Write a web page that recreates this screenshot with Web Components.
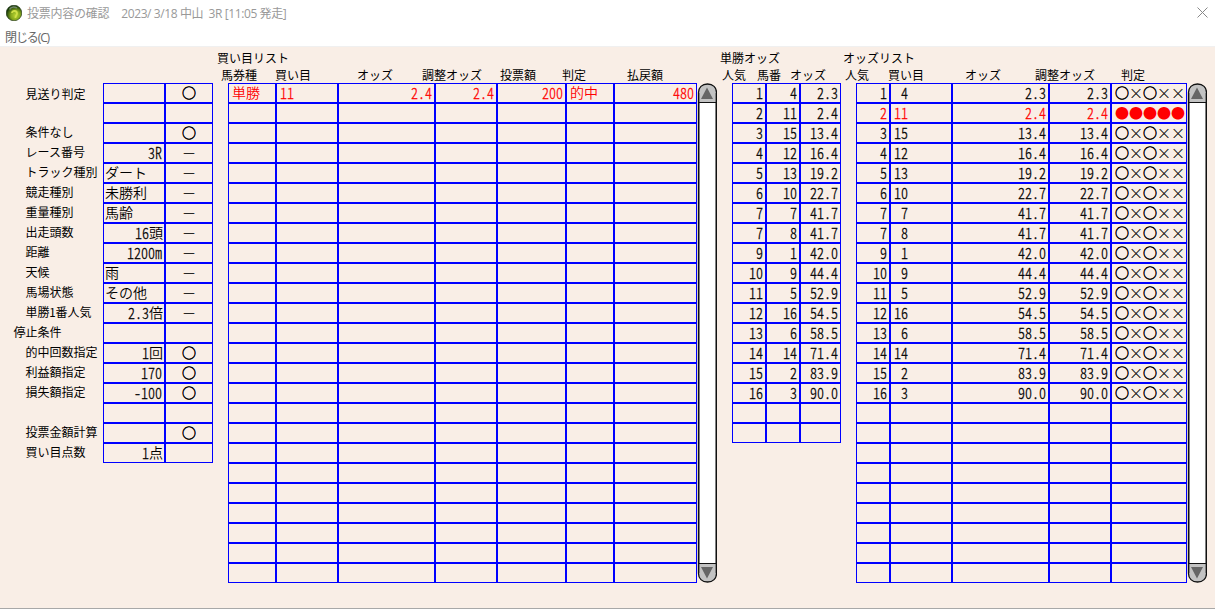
<!DOCTYPE html>
<html lang="ja">
  <head>
    <meta charset="UTF-8" />
    <meta name="viewport" content="width=device-width, initial-scale=1.0" />
    <title>投票内容の確認</title>
    <style>
      body {
        margin: 0;
        font-family: "Noto Sans CJK JP", sans-serif;
      }
    </style>
  </head>
  <body>
    <script>
      // one bordered grid; columns look like "48:l,62:r" (width:align)
      class GridTable extends HTMLElement {
        constructor() {
          super();
          this.attachShadow({ mode: "open" });
          this._rows = [];
        }

        set data(rows) {
          this._rows = rows;
          this._rendering();
        }

        connectedCallback() {
          this._rendering();
        }

        _rendering() {
          const cols = this.getAttribute("cols").split(",").map((c) => c.split(":"));
          const count = Number(this.getAttribute("rows"));
          let html = "";
          for (let i = 0; i < count; i++) {
            const row = this._rows[i] || [];
            html += `<div class="row${row.red ? " red" : ""}">`;
            cols.forEach(([width, align], c) => {
              const text = row[c] === undefined ? "" : row[c];
              // "a" puts values that start with a digit to the right
              if (align === "a") align = /^[-0-9]/.test(text) ? "r" : "k";
              html += `<div class="cell ${align}" style="width:${width}px">${this._cell(text)}</div>`;
            });
            html += "</div>";
          }
          this.shadowRoot.innerHTML = `
            <style>
              :host { display: block; flex: none; }
              .row { display: flex; height: 20px; }
              .cell {
                box-sizing: border-box;
                border: 1px solid #0000ff;
                height: 20px;
                padding-bottom: 2px;
                display: flex;
                align-items: center;
                font-size: 14px;
                line-height: 16px;
                white-space: pre;
              }
              .l { padding-left: 3px; }
              .k { padding-left: 1px; }
              .r { justify-content: flex-end; padding-right: 1px; }
              .c { justify-content: center; }
              .red { color: #ff0000; }
              .t { font-weight: 350; }
              .n { line-height: 14px; font-weight: 300; -webkit-text-stroke: 0.25px currentColor; transform: scaleY(1.1); }
              .r .n:last-child { margin-right: 1px; }
              .o { -webkit-text-stroke: 0.5px currentColor; }
              .x { font-weight: 300; -webkit-text-stroke: 0.2px currentColor; }
              .t, .o, .x { font-feature-settings: normal; }
            </style>${html}`;
        }

        // digits are stretched to the tall shape of the half-width face
        _cell(text) {
          return text
            .split(/([0-9.\-Rm ]+|○|×+|－)/)
            .filter((t) => t)
            .map((t) => {
              let kind = "t";
              if (/^[0-9.\-Rm ]+$/.test(t)) kind = "n";
              else if (t === "○") kind = "o";
              else if (t[0] === "×" || t === "－") kind = "x";
              return `<span class="${kind}">${t}</span>`;
            })
            .join("");
        }
      }
      customElements.define("grid-table", GridTable);

      class ScrollRail extends HTMLElement {
        constructor() {
          super();
          this.attachShadow({ mode: "open" });
          this.shadowRoot.innerHTML = `
            <style>
              :host { display: block; flex: none; width: 20px; height: 500px; }
              svg { display: block; }
            </style>
            <svg width="20" height="500" viewBox="0 0 20 500">
              <path d="M1.500 20V9.500C1.500 4.500 5 1 10.500 1S19.500 4.500 19.500 9.500V490.500C19.500 495.500 16 499 10.500 499S1.500 495.500 1.500 490.500Z" fill="#c3c3c3" stroke="#111" stroke-width="1.3" />
              <path d="M2 20H19V480H2Z" fill="#fff" />
              <path d="M2.500 10V490M18.500 10V490" stroke="#808080" />
              <path d="M1 19.500H19.500M1 480.500H19.500" stroke="#111" />
              <path d="M10 4.500L16 16H4ZM10 495.500L16 484H4Z" fill="#666" />
            </svg>`;
        }
      }
      customElements.define("scroll-rail", ScrollRail);

      // row of captions, items are "offset from the previous one:text"
      class CaptionRow extends HTMLElement {
        connectedCallback() {
          const items = this.getAttribute("items").split(",").map((i) => i.split(":"));
          this.attachShadow({ mode: "open" }).innerHTML = `
            <style>
              :host { display: flex; height: 17px; font-size: 12px; line-height: 15px; }
              span { white-space: pre; flex: none; }
            </style>
            ${items.map(([gap, text]) => `<span style="margin-left:${gap}px">${text}</span>`).join("")}`;
        }
      }
      customElements.define("caption-row", CaptionRow);

      class TitleBar extends HTMLElement {
        constructor() {
          super();
          this.attachShadow({ mode: "open" });
          this.shadowRoot.innerHTML = `
            <style>
              :host { display: block; background: #fff; height: 46px; border-bottom: 1px solid #f0f0f0; font-weight: 400; font-feature-settings: normal; }
              .bar { display: flex; align-items: center; height: 25px; padding: 0 7px 0 6px; color: #999; font-size: 12px; white-space: pre; }
              .name { margin-left: 5px; letter-spacing: -0.25px; }
              .race { margin-left: 12px; font-family: "Open Sans", "Noto Sans CJK JP", sans-serif; letter-spacing: -0.4px; }
              .x { margin-left: auto; }
              .menu { font: 12px/26px "Open Sans", "Noto Sans CJK JP", sans-serif; color: #666; padding-left: 5px; letter-spacing: -1.1px; }
            </style>
            <div class="bar">
              <svg width="16" height="16" viewBox="0 0 16 16">
                <defs>
                  <radialGradient id="g" cx=".6" cy=".65" r=".6">
                    <stop offset="0" stop-color="#b8d432" />
                    <stop offset=".5" stop-color="#86a81e" />
                    <stop offset="1" stop-color="#173a08" />
                  </radialGradient>
                </defs>
                <circle cx="8" cy="8" r="7.800" fill="url(#g)" stroke="#1a2e10" stroke-width=".6" />
                <path d="M3.500 4.500C5 2 8 1.500 11 3" fill="none" stroke="#71866a" stroke-width="1.500" />
                <path d="M6 8C6 5 11 5.500 11 8.500C11 10.500 9 11 9.500 13" fill="none" stroke="#cfe046" stroke-width="1.800" />
              </svg>
              <span class="name">投票内容の確認</span>
              <span class="race">2023/ 3/18 中山  3R [11:05 発走]</span>
              <svg class="x" width="11" height="11" viewBox="0 0 11 11"><path d="M.5 .5L10.500 10.500M10.500 .5L.5 10.500" stroke="#888" /></svg>
            </div>
            <div class="menu">閉じる(C)</div>`;
        }
      }
      customElements.define("title-bar", TitleBar);

      class ConditionList extends HTMLElement {
        constructor() {
          super();
          this.attachShadow({ mode: "open" });
          const labels = ["見送り判定", "", "条件なし", "レース番号", "トラック種別", "競走種別", "重量種別", "出走頭数", "距離", "天候", "馬場状態", "単勝1番人気", "停止条件", "的中回数指定", "利益額指定", "損失額指定", "", "投票金額計算", "買い目点数"];
          const kind = (text, i) => (text === "停止条件" ? "head" : i === 0 ? "first" : "");
          this.shadowRoot.innerHTML = `
            <style>
              :host { display: block; width: 103px; flex: none; font-size: 12px; }
              div { box-sizing: border-box; height: 20px; line-height: 18px; padding-left: 25.500px; white-space: pre; }
              .head { padding-left: 13.500px; }
              .first { line-height: 22px; }
            </style>
            ${labels.map((t, i) => `<div class="${kind(t, i)}">${t}</div>`).join("")}`;
        }
      }
      customElements.define("condition-list", ConditionList);

      class BetWindow extends HTMLElement {
        constructor() {
          super();
          this.attachShadow({ mode: "open" });
          this.shadowRoot.innerHTML = `
            <style>
              :host {
                display: block;
                box-sizing: border-box;
                width: 1215px;
                height: 609px;
                overflow: hidden;
                background: #f9eee6;
                border-bottom: 1px solid #a8a8a8;
                color: #000;
                font-weight: 400;
                font-feature-settings: "hwid";
              }
              .main { display: flex; padding-top: 3px; }
              .panel { flex: none; }
              .body { display: flex; }
              .cond { width: 217px; padding-top: 33px; }
              .bets { width: 503px; }
              .win { width: 123px; }
              .bets .body { padding-left: 11px; }
              .win .body { padding-left: 12px; }
              .odds .body { padding-left: 13px; }
              .panel caption-row + caption-row { height: 16px; }
            </style>
            <title-bar></title-bar>
            <div class="main">
              <div class="panel cond">
                <div class="body">
                  <condition-list></condition-list>
                  <grid-table id="cond" cols="62:a,48:c" rows="19"></grid-table>
                </div>
              </div>
              <div class="panel bets">
                <caption-row items="0:買い目リスト"></caption-row>
                <caption-row items="4:馬券種,18:買い目,46:オッズ,29:調整オッズ,18:投票額,26:判定,41:払戻額"></caption-row>
                <div class="body">
                  <grid-table id="bets" cols="48:l,62:l,97:r,62:r,69:r,48:l,83:r" rows="25"></grid-table>
                  <scroll-rail></scroll-rail>
                </div>
              </div>
              <div class="panel win">
                <caption-row items="0:単勝オッズ"></caption-row>
                <caption-row items="2:人気,11:馬番,9:オッズ"></caption-row>
                <div class="body"><grid-table id="win" cols="34:r,34:r,41:r" rows="18"></grid-table></div>
              </div>
              <div class="panel odds">
                <caption-row items="0:オッズリスト"></caption-row>
                <caption-row items="2:人気,19:買い目,41:オッズ,34:調整オッズ,26:判定"></caption-row>
                <div class="body">
                  <grid-table id="odds" cols="34:r,62:l,97:r,62:r,76:l" rows="25"></grid-table>
                  <scroll-rail></scroll-rail>
                </div>
              </div>
            </div>`;
        }

        connectedCallback() {
          const root = this.shadowRoot;
          root.getElementById("cond").data = [
            ["", "○"], [], ["", "○"], ["3R", "－"], ["ダート", "－"], ["未勝利", "－"], ["馬齢", "－"],
            ["16頭", "－"], ["1200m", "－"], ["雨", "－"], ["その他", "－"], ["2.3倍", "－"], [],
            ["1回", "○"], ["170", "○"], ["-100", "○"], [], ["", "○"], ["1点", ""],
          ];
          const bet = ["単勝", "11", "2.4", "2.4", "200", "的中", "480"];
          bet.red = true;
          root.getElementById("bets").data = [bet];

          // rank, horse number, odds
          const odds = [
            [1, 4, "2.3"], [2, 11, "2.4"], [3, 15, "13.4"], [4, 12, "16.4"],
            [5, 13, "19.2"], [6, 10, "22.7"], [7, 7, "41.7"], [7, 8, "41.7"],
            [9, 1, "42.0"], [10, 9, "44.4"], [11, 5, "52.9"], [12, 16, "54.5"],
            [13, 6, "58.5"], [14, 14, "71.4"], [15, 2, "83.9"], [16, 3, "90.0"],
          ];
          root.getElementById("win").data = odds.map(([rank, no, odd]) => [String(rank), String(no), odd]);
          root.getElementById("odds").data = odds.map(([rank, no, odd]) => {
            const picked = no === 11;
            const row = [String(rank), String(no).padStart(2, " "), odd, odd, picked ? "●●●●●" : "○×○××"];
            row.red = picked;
            return row;
          });
        }
      }
      customElements.define("bet-window", BetWindow);
    </script>
    <bet-window></bet-window>
  </body>
</html>
